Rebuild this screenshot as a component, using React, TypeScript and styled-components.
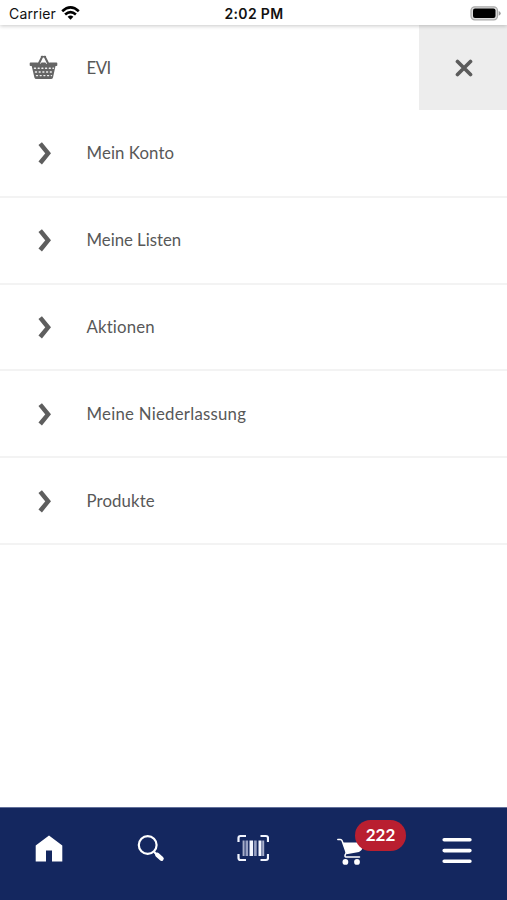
import React from 'react';
import styled, { createGlobalStyle } from 'styled-components';

const Global = createGlobalStyle`
  * { box-sizing: border-box; }
  body { margin: 0; background: #fff; }
  button { border: 0; padding: 0; margin: 0; background: none; }
`;

const Screen = styled.div`
  display: flex;
  flex-direction: column;
  width: 507px;
  height: 900px;
  overflow: hidden;
  background: #fff;
  color: #585858;
  font-family: Lato, "Open Sans", sans-serif;
`;

const StatusBar = styled.header`
  display: grid;
  grid-template-columns: 1fr auto 1fr;
  align-items: center;
  height: 25px;
  flex: none;
  padding: 2px 6px 0 9px;
  color: #111;
  font: 400 14px/22px Inter, sans-serif;
  box-shadow: 0 1px 4px rgba(0, 0, 0, 0.22);
  z-index: 1;
  background: #fff;
`;

const Carrier = styled.div`
  display: flex;
  align-items: center;
  gap: 5px;
  letter-spacing: 0.15px;
`;

const Clock = styled.div`
  margin-right: 2px;
  font-weight: 600;
  font-size: 14px;
  letter-spacing: 0.35px;
`;

const Battery = styled.svg`
  justify-self: end;
`;

const TopRow = styled.div`
  display: flex;
  height: 85px;
  flex: none;
`;

const IconSlot = styled.span`
  display: flex;
  align-items: center;
  width: 86.5px;
  flex: none;
  padding-left: 29px;
`;

const Label = styled.span<{ $spacing: number }>`
  font-size: 16.8px;
  line-height: 20px;
  letter-spacing: ${(p) => p.$spacing}px;
  white-space: nowrap;
`;

const Brand = styled.div`
  display: flex;
  flex: 1;
  align-items: center;
`;

const CloseButton = styled.button`
  display: flex;
  align-items: center;
  justify-content: center;
  width: 88px;
  padding-left: 2px;
  background: #ededed;
`;

const Menu = styled.nav`
  display: flex;
  flex-direction: column;
  flex: 1;
  padding-top: 1px;
`;

const MenuItem = styled.div`
  display: flex;
  align-items: center;
  height: 86.8px;
  border-bottom: 2px solid #f3f3f3;
`;

const TabBar = styled.footer`
  display: grid;
  grid-template-columns: 98px 105px 100px 101px 103px;
  height: 93px;
  flex: none;
  background: #14275f;
  border-top: 1px solid #62709a;
`;

const Tab = styled.button`
  position: relative;
  display: flex;
  justify-content: center;
  padding-top: 25px;
`;

const CartTab = styled(Tab)`
  padding-right: 7px;
`;

const MenuTab = styled(Tab)`
  padding-left: 2px;
`;

const Badge = styled.span`
  position: absolute;
  left: 52px;
  top: 12px;
  width: 51px;
  height: 31px;
  border-radius: 16px;
  background: #b91f30;
  color: #fff;
  font: 700 17px/29px Lato, sans-serif;
  letter-spacing: -0.1px;
  text-align: center;
`;

const items = [
  { label: 'Mein Konto', spacing: 0.1 },
  { label: 'Meine Listen', spacing: -0.02 },
  { label: 'Aktionen', spacing: 0.15 },
  { label: 'Meine Niederlassung', spacing: 0.25 },
  { label: 'Produkte', spacing: 0.12 },
];

const Wifi = () => (
  <svg width="19" height="15" viewBox="0 0 19 15" fill="none" stroke="#000" strokeWidth="2.6">
    <path d="M1.200 5.300Q9.500-2.400 17.800 5.300" />
    <path d="M4.100 8.500Q9.500 3.600 14.900 8.500" />
    <path d="M9.500 13.800 6.600 10.800Q9.500 8.300 12.400 10.800Z" fill="#000" stroke="none" />
  </svg>
);

const Basket = () => (
  <svg width="29" height="26" viewBox="0 0 29 26">
    <path d="M1.500 7.500h26q.8 0 .8.8v1.900q0 .8-.8.8h-1L24 22.500q-.4 1.500-2 1.500H7.400q-1.600 0-2-1.500L2.700 11H1.500q-.8 0-.8-.8V8.300q0-.8.8-.8Z" fill="#656565" />
    <path d="m9.700 7.800 3-5.800M19.300 7.800 16.200 2" stroke="#fff" strokeWidth="4.600" />
    <path d="m9.500 9.200 3.400-6.800M19.500 9.200l-3.400-6.800M12.800 1.800h.8M15.300 1.800h.8" stroke="#656565" strokeWidth="2.100" strokeLinecap="round" />
    <g stroke="#f2f2f2" strokeWidth="1.400" strokeLinecap="round" strokeDasharray="1 2.700">
      <path d="M5.500 13.300h19M6.500 17h17M7.500 20.600h15" />
    </g>
  </svg>
);

const Chevron = () => (
  <svg width="30" height="24" viewBox="0 0 30 24" fill="none" stroke="#5e5e5e" strokeWidth="4.500">
    <path d="m11.200 2.600 7.900 9.700-7.900 9.700" />
  </svg>
);

const Cross = () => (
  <svg width="18" height="18" viewBox="0 0 18 18" stroke="#5c5c5c" strokeWidth="3.700" strokeLinecap="round">
    <path d="m2.500 2.500 13 13M15.500 2.500l-13 13" />
  </svg>
);

const Home = () => (
  <svg width="28" height="30" viewBox="0 0 28 30">
    <path d="M14 2.500 27.300 12.500V28.500H17V17.500H11V28.500H.7V12.500Z" fill="#fff" />
  </svg>
);

const Search = () => (
  <svg width="28" height="30" viewBox="0 0 28 30" fill="none" stroke="#fff">
    <circle cx="10.700" cy="12" r="8.900" strokeWidth="2.200" />
    <path d="m17.200 19 2.400 2.400" strokeWidth="2.200" />
    <path d="m20.300 21.800 4.200 3.900" strokeWidth="4.500" strokeLinecap="round" />
  </svg>
);

const Barcode = () => (
  <svg width="32" height="30" viewBox="0 0 32 30" fill="none" stroke="#f2f5ff" strokeWidth="2.200">
    <path d="M1.500 9V5q0-2 2-2H9M23.500 3H29q2 0 2 2v4M1.500 21v4q0 2 2 2H9M23.500 27H29q2 0 2-2v-4" />
    <path d="M6.600 7.500v15.500M26.200 7.500v15.500" stroke="#a8b0cc" strokeWidth="2" />
    <path d="M9.800 7.500v15.500M18.400 7.500v15.500" stroke="#98a2c4" strokeWidth="2.600" />
    <path d="M14.300 7.500v15.500" strokeWidth="3.600" />
    <path d="M23 7.500v15.500" strokeWidth="3" />
  </svg>
);

const Cart = () => (
  <svg width="26" height="32" viewBox="0 0 26 32">
    <path d="M.8 6.400h2.500q1.300 0 1.800 1.300L9 18.800q.5 1.600-.8 2.900-.6 2.200.5 2.300H22.500" fill="none" stroke="#fff" strokeWidth="1.500" strokeLinecap="round" />
    <path d="M5.700 9.600H25.500V15Q25 18 22 18.900L9.500 21.200Z" fill="#fff" />
    <circle cx="8.400" cy="28.900" r="2.900" fill="#fff" />
    <circle cx="20" cy="28.900" r="2.900" fill="#fff" />
  </svg>
);

const Burger = () => (
  <svg width="30" height="30" viewBox="0 0 30 30" stroke="#fff" strokeWidth="3.600" strokeLinecap="round">
    <path d="M2.200 6.800h25.700M2.200 17.600h25.700M2.200 28.200h25.700" />
  </svg>
);

export default function App() {
  return (
    <Screen>
      <Global />
      <StatusBar>
        <Carrier><span>Carrier</span><Wifi /></Carrier>
        <Clock>2:02 PM</Clock>
        <Battery width="31" height="15" viewBox="0 0 31 15">
          <rect x="1" y=".8" width="26.500" height="13" rx="3.700" fill="#ddd" stroke="#aaa" strokeWidth="1.200" />
          <rect x="3" y="2.500" width="22.500" height="9.600" rx="2" fill="#000" />
          <path d="M28.700 5v4.800q2-.9 2-2.400t-2-2.400Z" fill="#999" />
        </Battery>
      </StatusBar>
      <TopRow>
        <Brand>
          <IconSlot><Basket /></IconSlot>
          <Label $spacing={-0.5}>EVI</Label>
        </Brand>
        <CloseButton aria-label="Menü schließen"><Cross /></CloseButton>
      </TopRow>
      <Menu>
        {items.map((item) => (
          <MenuItem key={item.label}>
            <IconSlot><Chevron /></IconSlot>
            <Label $spacing={item.spacing}>{item.label}</Label>
          </MenuItem>
        ))}
      </Menu>
      <TabBar>
        <Tab><Home /></Tab>
        <Tab><Search /></Tab>
        <Tab><Barcode /></Tab>
        <CartTab><Cart /><Badge>222</Badge></CartTab>
        <MenuTab><Burger /></MenuTab>
      </TabBar>
    </Screen>
  );
}
